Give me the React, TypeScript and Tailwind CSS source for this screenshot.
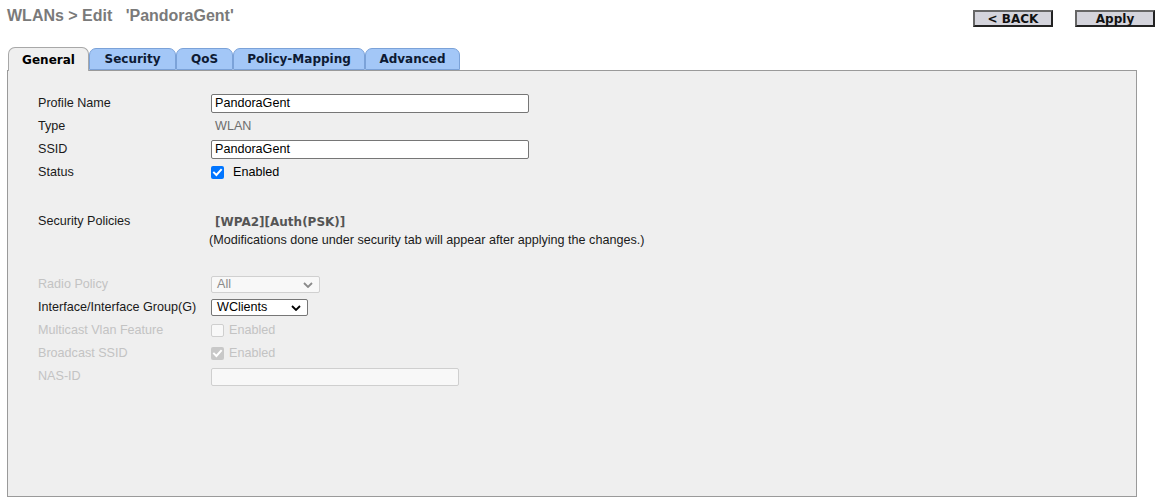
import React from "react";

const Check = ({ color }: { color: string }) => (
  <svg viewBox="0 0 13 13" width="13" height="13" className="block">
    <path d="M3 6.6 L5.4 9 L10 3.8" fill="none" stroke={color} strokeWidth="2" strokeLinecap="square" />
  </svg>
);

const Chevron = ({ color }: { color: string }) => (
  <svg viewBox="0 0 10 6" width="10" height="6" className="block">
    <path d="M1 1 L5 5 L9 1" fill="none" stroke={color} strokeWidth="1.8" />
  </svg>
);

const Row = ({ label, disabled, children }: { label: string; disabled?: boolean; children?: React.ReactNode }) => (
  <div className="flex h-[23px] items-center">
    <div className={`w-[173px] shrink-0 ${disabled ? "text-[#c3c3c3]" : "text-[#1a1a1a]"}`}>{label}</div>
    <div className="flex items-center">{children}</div>
  </div>
);

const tabs = [
  { name: "General", w: "w-[81px]" },
  { name: "Security", w: "w-[87px]" },
  { name: "QoS", w: "w-[57px]" },
  { name: "Policy-Mapping", w: "w-[132px]" },
  { name: "Advanced", w: "w-[95px]" },
];

export default function App() {
  return (
    <div className="h-[500px] w-[1161px] bg-white font-['Liberation_Sans',Arial,sans-serif] text-[12.6px] overflow-hidden">
      <div className="flex items-start justify-between pl-[7px] pr-[6px] pt-[10px]">
        <div className="text-[16px] font-bold text-[#7a7a7a] leading-[16px] -mt-[2px]">
          WLANs &gt; Edit&nbsp;&nbsp; 'PandoraGent'
        </div>
        <div className="flex gap-[22px]">
          <div className="flex h-[17px] w-[80px] items-center justify-center border-2 border-t-[#666] border-l-[#666] border-r-[#222] border-b-[#222] bg-[#d4d4dc] font-['DejaVu_Sans',Verdana,sans-serif] text-[12px] font-bold text-[#111]">
            &lt; BACK
          </div>
          <div className="flex h-[17px] w-[80px] items-center justify-center border-2 border-t-[#666] border-l-[#666] border-r-[#222] border-b-[#222] bg-[#d4d4dc] font-['DejaVu_Sans',Verdana,sans-serif] text-[12px] font-bold text-[#111]">
            Apply
          </div>
        </div>
      </div>

      <div className="relative z-10 mt-[20px] ml-[8px] flex items-end font-['DejaVu_Sans',Verdana,sans-serif] text-[12px] font-bold">
        {tabs.map((t, i) =>
          i === 0 ? (
            <div
              key={t.name}
              className={`${t.w} h-[24px] -mb-px flex items-center justify-center rounded-t-[7px] border border-b-0 border-[#a8a8a8] bg-[#efefef] text-black`}
            >
              {t.name}
            </div>
          ) : (
            <div
              key={t.name}
              className={`${t.w} h-[22px] flex items-center justify-center rounded-t-[7px] border border-[#7ba2d8] bg-[#a3c7f7] text-[#0d1a33]`}
            >
              {t.name}
            </div>
          )
        )}
      </div>

      <div className="ml-[7px] h-[427px] w-[1130px] border border-[#9a9a9a] bg-[#efefef] pl-[30px] pt-[21px]">
        <Row label="Profile Name">
          <div className="flex h-[19px] w-[318px] items-center rounded-[2px] border border-[#767676] bg-white pl-[3px] text-black">
            PandoraGent
          </div>
        </Row>
        <Row label="Type">
          <span className="pl-[4px] text-[#6d6d6d]">WLAN</span>
        </Row>
        <Row label="SSID">
          <div className="flex h-[19px] w-[318px] items-center rounded-[2px] border border-[#767676] bg-white pl-[3px] text-black">
            PandoraGent
          </div>
        </Row>
        <Row label="Status">
          <div className="flex items-center">
            <div className="h-[13px] w-[13px] rounded-[2px] bg-[#0075ff]">
              <Check color="#fff" />
            </div>
            <span className="ml-[9px] text-black">Enabled</span>
          </div>
        </Row>

        <div className="h-[26px]" />
        <Row label="Security Policies">
          <span className="pl-[4px] font-['DejaVu_Sans',Verdana,sans-serif] text-[12px] font-bold text-[#555]">[WPA2][Auth(PSK)]</span>
        </Row>
        <div className="-mt-[2px] h-[19px] pl-[171px] text-[#1a1a1a]">
          (Modifications done under security tab will appear after applying the changes.)
        </div>
        <div className="h-[23px]" />

        <Row label="Radio Policy" disabled>
          <div className="flex h-[17px] w-[109px] items-center justify-between rounded-[2px] border border-[#d0d0d0] bg-[#f8f8f8] pl-[5px] pr-[6px] text-[#8a8a8a]">
            <span>All</span>
            <Chevron color="#8a8a8a" />
          </div>
        </Row>
        <Row label="Interface/Interface Group(G)">
          <div className="flex h-[17px] w-[97px] items-center justify-between rounded-[2px] border border-[#767676] bg-white pl-[5px] pr-[6px] text-black">
            <span>WClients</span>
            <Chevron color="#000" />
          </div>
        </Row>
        <Row label="Multicast Vlan Feature" disabled>
          <div className="flex items-center">
            <div className="h-[13px] w-[13px] rounded-[2px] border border-[#cfcfcf] bg-[#f8f8f8]" />
            <span className="ml-[5px] text-[#c3c3c3]">Enabled</span>
          </div>
        </Row>
        <Row label="Broadcast SSID" disabled>
          <div className="flex items-center">
            <div className="h-[13px] w-[13px] rounded-[2px] bg-[#c8c8c8]">
              <Check color="#fff" />
            </div>
            <span className="ml-[5px] text-[#c3c3c3]">Enabled</span>
          </div>
        </Row>
        <Row label="NAS-ID" disabled>
          <div className="h-[18px] w-[248px] rounded-[2px] border border-[#cfcfcf] bg-[#f8f8f8]" />
        </Row>
      </div>
    </div>
  );
}
